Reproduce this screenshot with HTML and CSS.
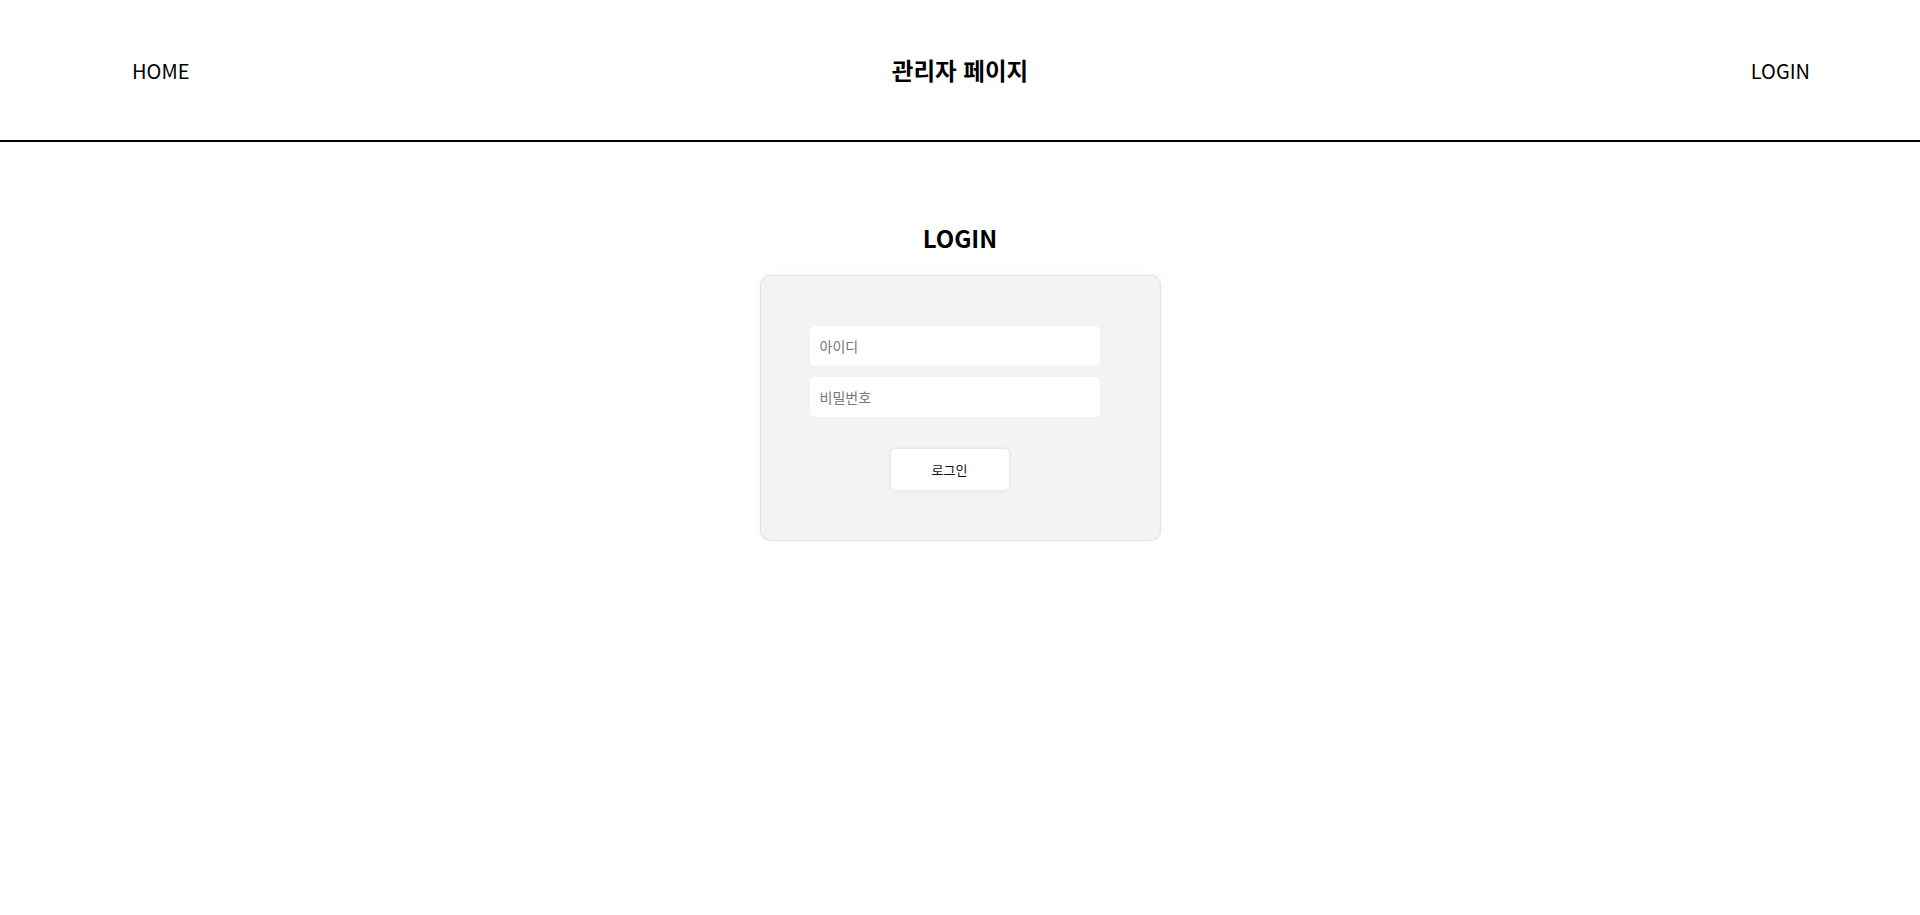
FILE: index.html
```html
<!DOCTYPE html>
<html lang="ko">
<head>
<meta charset="utf-8">
<title>관리자 페이지</title>
<link rel="stylesheet" href="styles.css">
</head>
<body>
<header class="site-header">
  <a class="nav-link nav-left" href="#">HOME</a>
  <h1 class="site-title">관리자 페이지</h1>
  <a class="nav-link nav-right" href="#">LOGIN</a>
</header>
<main class="main">
  <h2 class="login-title">LOGIN</h2>
  <form class="login-card">
    <input class="login-input" type="text" placeholder="아이디">
    <input class="login-input" type="password" placeholder="비밀번호">
    <button class="login-button" type="button">로그인</button>
  </form>
</main>
</body>
</html>
```

FILE: styles.css
```css
* {
  box-sizing: border-box;
}

html, body {
  margin: 0;
  padding: 0;
  background: #ffffff;
  font-family: "Noto Sans CJK KR", "Noto Sans", sans-serif;
  color: #000;
}

.site-header {
  height: 142px;
  border-bottom: 2px solid #000;
  display: grid;
  grid-template-columns: 1fr auto 1fr;
  align-items: center;
  padding: 0 110px;
}

.nav-link {
  font-size: 20px;
  color: #000;
  text-decoration: none;
}

.nav-left {
  justify-self: start;
  padding-left: 22px;
}

.nav-right {
  justify-self: end;
}

.site-title {
  margin: 0;
  font-size: 23.5px;
  font-weight: 700;
}

.main {
  display: flex;
  flex-direction: column;
  align-items: center;
  padding-top: 78px;
}

.login-title {
  margin: 0 0 20px;
  font-size: 24px;
  font-weight: 700;
  line-height: normal;
}

.login-card {
  width: 401px;
  padding: 50px 59px 50px 49px;
  background: #f3f3f3;
  border: 1px solid #e2e2e2;
  border-radius: 10px;
  box-shadow: 0 0 10px rgba(0, 0, 0, 0.05);
  display: flex;
  flex-direction: column;
  align-items: flex-start;
}

.login-input {
  width: 290px;
  height: 40px;
  border: none;
  border-radius: 5px;
  background: #fff;
  padding: 0 10px;
  font-family: inherit;
  font-size: 14px;
  color: #222;
  outline: none;
}

.login-input + .login-input {
  margin-top: 11px;
}

.login-input::placeholder {
  color: #767676;
}

.login-button {
  margin-top: 32px;
  margin-left: 81px;
  width: 118px;
  height: 41px;
  border: none;
  border-radius: 5px;
  background: #fff;
  box-shadow: 0 0 4px rgba(0, 0, 0, 0.1);
  font-family: inherit;
  font-size: 13px;
  color: #111;
  cursor: pointer;
}
```
